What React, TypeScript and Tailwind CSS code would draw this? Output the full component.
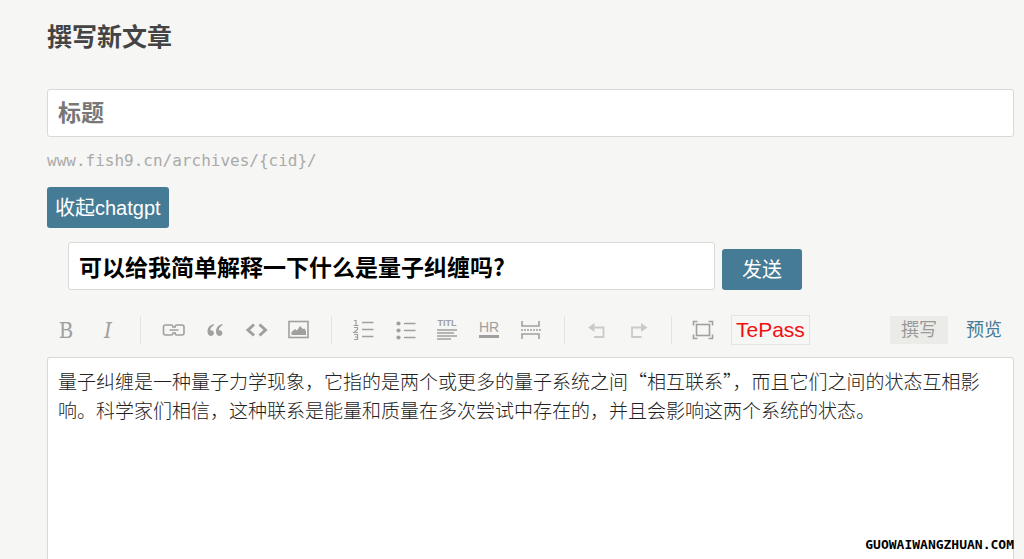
import React, { useState } from 'react';

const iconClass = 'flex h-[30px] w-[38px] shrink-0 items-center justify-center';

const Separator: React.FC = () => (
  <span className="flex h-7 w-[19px] shrink-0 justify-center">
    <span className="w-px bg-[#e4e4e1]" />
  </span>
);

interface ToolProps {
  label: string;
  faded?: boolean;
  children: React.ReactNode;
}

const Tool: React.FC<ToolProps> = ({ label, faded, children }) => (
  <button
    type="button"
    aria-label={label}
    className={faded ? `${iconClass} text-[#cacac8]` : `${iconClass} text-[#a0a09e]`}
  >
    <svg width="24" height="24" viewBox="0 0 24 24" fill="none" stroke="currentColor">
      {children}
    </svg>
  </button>
);

const initialText =
  '量子纠缠是一种量子力学现象，它指的是两个或更多的量子系统之间“相互联系”，而且它们之间的状态互相影响。科学家们相信，这种联系是能量和质量在多次尝试中存在的，并且会影响这两个系统的状态。';

const App: React.FC = () => {
  const [title, setTitle] = useState('');
  const [question, setQuestion] = useState('可以给我简单解释一下什么是量子纠缠吗?');
  const [text, setText] = useState(initialText);

  return (
    <div className="relative flex min-h-screen flex-col bg-[#f6f6f4] pt-[22px] pr-[10px] pl-[47px] font-['Liberation_Sans','Noto_Sans_CJK_SC',sans-serif]">
      <h1 className="text-[25px] leading-[30px] font-bold text-[#444]">撰写新文章</h1>

      <input
        type="text"
        aria-label="标题"
        placeholder="标题"
        value={title}
        onChange={(e) => setTitle(e.target.value)}
        className="mt-[37px] h-12 w-full rounded-[3px] border border-[#d9d9d6] bg-white px-[10px] text-[23px] font-bold outline-none placeholder:text-[#777]"
      />

      <p className="mt-3 font-['DejaVu_Sans_Mono',monospace] text-[16px] leading-6 text-[#aaa]">
        www.fish9.cn/archives/{'{cid}'}/
      </p>

      <button
        type="button"
        className="mt-[14px] h-[41px] self-start rounded-[3px] bg-[#467b96] px-2 text-[20px] text-white"
      >
        收起chatgpt
      </button>

      <form
        className="mt-[14px] flex items-end gap-[7px] pl-[21px]"
        onSubmit={(e) => e.preventDefault()}
      >
        <input
          type="text"
          aria-label="问题"
          value={question}
          onChange={(e) => setQuestion(e.target.value)}
          className="h-12 w-[647px] rounded-[3px] border border-[#d9d9d6] bg-white px-[10px] font-['Noto_Sans_CJK_SC',sans-serif] text-[23px] font-bold text-black outline-none"
        />
        <button
          type="submit"
          className="h-[41px] rounded-[3px] bg-[#467b96] px-5 text-[20px] text-white"
        >
          发送
        </button>
      </form>

      <div className="mt-[25px] flex items-center justify-between">
        <div className="flex items-center gap-1">
          <button
            type="button"
            aria-label="加粗"
            className={`${iconClass} font-['DejaVu_Serif_Condensed','DejaVu_Serif',serif] text-[22px] text-[#a0a09e]`}
          >
            B
          </button>
          <button
            type="button"
            aria-label="斜体"
            className={`${iconClass} font-['DejaVu_Serif_Condensed','DejaVu_Serif',serif] text-[22px] text-[#a0a09e] italic`}
          >
            I
          </button>
          <Separator />
          <Tool label="链接">
            <path
              d="M12 10V9a2 2 0 0 0-2-2H4.500a2 2 0 0 0-2 2v6a2 2 0 0 0 2 2H10a2 2 0 0 0 2-2v-1M14 10V9a2 2 0 0 1 2-2h5a2 2 0 0 1 2 2v6a2 2 0 0 1-2 2h-5a2 2 0 0 1-2-2v-1M8.500 12h9"
              strokeWidth="1.6"
            />
          </Tool>
          <Tool label="引用">
            <path
              d="M10.800 6C7 6.800 4.500 9.600 4.500 13.600c0 2.700 1.300 4.400 3.400 4.400 1.700 0 3-1.200 3-2.900s-1.200-2.800-2.900-2.800c-.3 0-.6 0-.8.2.2-2.400 1.500-4.200 3.800-5.300zM19.300 6c-3.800.8-6.300 3.600-6.300 7.600 0 2.700 1.300 4.400 3.400 4.400 1.700 0 3-1.200 3-2.900s-1.200-2.800-2.900-2.800c-.3 0-.6 0-.8.2.2-2.400 1.500-4.200 3.800-5.300z"
              fill="currentColor"
              stroke="none"
            />
          </Tool>
          <Tool label="代码">
            <path d="M9 6.500L3 12l6 5.500M14.500 6.500l6 5.500-6 5.500" strokeWidth="3" />
          </Tool>
          <Tool label="图片">
            <rect x="2" y="3.500" width="19" height="16" strokeWidth="1.600" />
            <path
              d="M4.500 17v-3l3.500-3 2 1.500L13 8l3 3 1.500-.5L19 13v4z"
              fill="currentColor"
              stroke="none"
            />
          </Tool>
          <Separator />
          <Tool label="数字列表">
            <path d="M10 4.500h11.500M10 11.500h11.500M10 18.500h11.500" strokeWidth="1.600" />
            <path
              d="M2 2.500h2v5M1.500 7.500h5M2 9.500h3.500v2L2 14.500h4M2 16.500h3.500v5H2M3 19h2.500"
              strokeWidth="1.200"
            />
          </Tool>
          <Tool label="普通列表">
            <path d="M10 5.500h11.500M10 12.500h11.500M10 19.500h11.500" strokeWidth="1.600" />
            <g fill="currentColor" stroke="none">
              <circle cx="4.500" cy="5.500" r="2.100" />
              <circle cx="4.500" cy="12.500" r="2.100" />
              <circle cx="4.500" cy="19.500" r="2.100" />
            </g>
          </Tool>
          <Tool label="标题级别">
            <text
              x="11"
              y="8"
              textAnchor="middle"
              fill="currentColor"
              stroke="none"
              className="font-['Liberation_Sans',sans-serif] text-[9px] font-bold"
            >
              TITL
            </text>
            <path d="M1 12h20M1 15h17M1 18h20M1 21h14" strokeWidth="1.600" />
          </Tool>
          <Tool label="分割线">
            <text
              x="11"
              y="14"
              textAnchor="middle"
              fill="currentColor"
              stroke="none"
              className="font-['Liberation_Sans',sans-serif] text-[14px]"
            >
              HR
            </text>
            <path d="M1 18.500h20" strokeWidth="3" />
          </Tool>
          <Tool label="摘要分割">
            <path d="M2 3v5h17V3M2 21v-5h17v5" strokeWidth="1.600" />
            <path d="M1 12h20" strokeWidth="1.600" strokeDasharray="2 1" />
          </Tool>
          <Separator />
          <Tool label="撤销" faded>
            <path d="M9 9.500h9.500v9.500H9" strokeWidth="1.800" />
            <path d="M3 9.500L9.500 5v9z" fill="currentColor" stroke="none" />
          </Tool>
          <Tool label="重做" faded>
            <path d="M14.500 9.500H5v9.500h9.500" strokeWidth="1.800" />
            <path d="M20.500 9.500L14 5v9z" fill="currentColor" stroke="none" />
          </Tool>
          <Separator />
          <Tool label="全屏">
            <rect x="4.500" y="6.500" width="13" height="11" strokeWidth="1.600" />
            <path
              d="M1.500 7.500v-4h4M16.500 3.500h4v4M20.500 16.500v4h-4M5.500 20.500h-4v-4"
              strokeWidth="1.600"
            />
          </Tool>
          <button
            type="button"
            className="ml-1 h-[30px] border border-[#e4e4e1] px-1 text-[21px] leading-7 text-[#f00f0f]"
          >
            TePass
          </button>
        </div>

        <div className="flex items-center text-[18px] leading-7">
          <a href="#write" className="bg-[#ebebe8] px-[11px] text-[#999]">
            撰写
          </a>
          <a href="#preview" className="px-3 pl-[18px] text-[#467b96]">
            预览
          </a>
        </div>
      </div>

      <textarea
        aria-label="文章内容"
        value={text}
        onChange={(e) => setText(e.target.value)}
        className="mt-3 w-full flex-1 resize-none rounded-t-[3px] border border-b-0 border-[#d9d9d6] bg-white px-[10px] py-2 font-['Noto_Sans_CJK_SC',sans-serif] text-[19px] leading-[29px] font-light text-[#222] outline-none"
      />

      <span className="absolute right-[10px] bottom-1 font-['DejaVu_Sans_Mono',monospace] text-[13px] leading-5 font-bold text-black">
        GUOWAIWANGZHUAN.COM
      </span>
    </div>
  );
};

export default App;
